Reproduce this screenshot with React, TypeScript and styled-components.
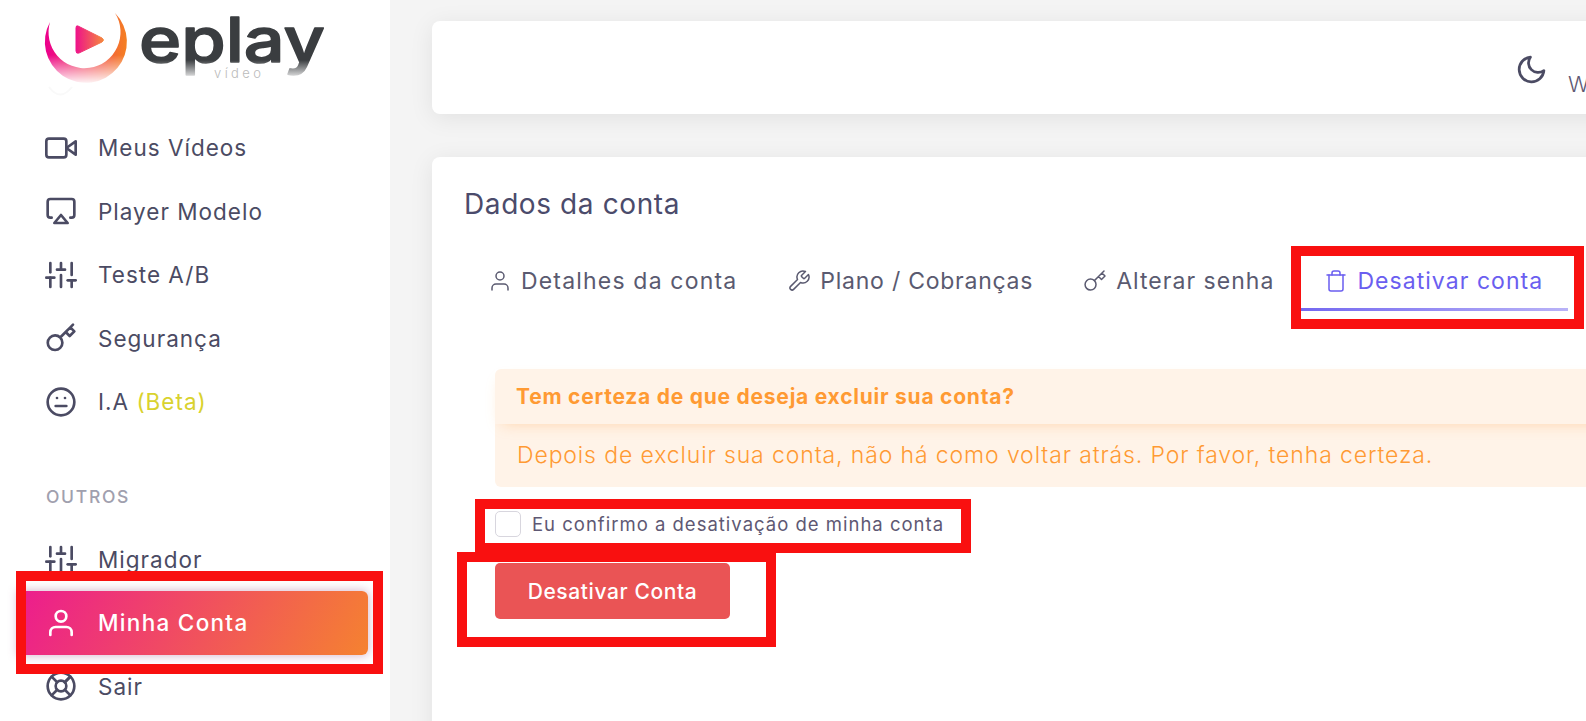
import React from 'react';
import styled, { createGlobalStyle } from 'styled-components';
import { FiVideo, FiAirplay, FiSliders, FiKey, FiMeh, FiUser, FiLifeBuoy, FiTool, FiTrash, FiMoon } from 'react-icons/fi';

const Global = createGlobalStyle`
  html, body { margin: 0; padding: 0; background: #f4f4f4; }
  * { box-sizing: border-box; }
`;

const Page = styled.div`
  position: relative;
  display: flex;
  width: 1586px;
  height: 721px;
  overflow: hidden;
  background: #f4f4f4;
  font-family: Inter, "Open Sans", sans-serif;
  color: #4b4b63;
`;

const Sidebar = styled.aside`
  flex: 0 0 390px;
  display: flex;
  flex-direction: column;
  background: #fff;
`;

const LogoBox = styled.div`
  height: 116px;
  flex: none;
`;

const NavRow = styled.div<{ $active?: boolean }>`
  flex: none;
  height: 63.5px;
  width: 350px;
  margin-left: 18px;
  padding-left: 27px;
  display: flex;
  align-items: center;
  gap: 21px;
  font-size: 22.5px;
  letter-spacing: ${p => (p.$active ? '1.3px' : '1px')};
  color: ${p => (p.$active ? '#fff' : '#4b4b63')};
  background: ${p => (p.$active ? 'linear-gradient(118deg, #ec1c8e, #f58230)' : 'transparent')};
  border-radius: ${p => (p.$active ? '0 6px 6px 0' : '0')};
  box-shadow: ${p => (p.$active ? '0 0 10px 1px rgba(150, 60, 120, 0.35)' : 'none')};
  font-weight: ${p => (p.$active ? 500 : 400)};
  svg { flex: none; }
`;

const Beta = styled.span`
  color: #d9d22e;
`;

const SectionLabel = styled.div`
  flex: none;
  height: 94px;
  padding: 52px 0 0 46px;
  font-size: 17.5px;
  line-height: 21px;
  font-weight: 500;
  letter-spacing: 1.7px;
  color: #a0a0ae;
`;

const Main = styled.main`
  flex: 1;
  min-width: 0;
  padding: 21px 0 0 42px;
  display: flex;
  flex-direction: column;
  gap: 43px;
  overflow: hidden;
`;

const Card = styled.section`
  width: 1300px;
  flex: none;
  background: #fff;
  border-radius: 8px;
  box-shadow: 0 4px 24px rgba(0, 0, 0, 0.08);
`;

const TopBar = styled(Card)`
  height: 93px;
  display: flex;
  align-items: flex-start;
  padding: 32px 0 0 1083px;
  gap: 20px;
`;

const UserName = styled.span`
  margin-top: 18px;
  font-size: 22px;
  line-height: 26px;
  font-weight: 300;
  color: #5e5873;
`;

const AccountCard = styled(Card)`
  height: 620px;
  padding: 32px 0 0 32px;
`;

const Title = styled.h2`
  margin: 0 0 31px;
  font-size: 28px;
  line-height: 31px;
  font-weight: 400;
  letter-spacing: 0.6px;
  color: #4b4b6b;
`;

const Tabs = styled.nav`
  display: flex;
  margin-left: -1px;
`;

const Tab = styled.div<{ $active?: boolean; $track?: number }>`
  position: relative;
  height: 60px;
  padding: 0 25px;
  display: flex;
  align-items: center;
  gap: 9px;
  font-size: 23px;
  font-weight: 400;
  letter-spacing: ${p => p.$track ?? 1.18}px;
  color: ${p => (p.$active ? '#6a5ef0' : '#5a5a70')};
  svg { flex: none; }
  &::after {
    content: '';
    display: ${p => (p.$active ? 'block' : 'none')};
    position: absolute;
    left: 0;
    right: 0;
    bottom: 0;
    height: 3px;
    background: linear-gradient(90deg, #7367f0, rgba(115, 103, 240, 0.5));
  }
`;

const Content = styled.div`
  margin: 58px 0 0 31px;
`;

const Alert = styled.div`
  background: #fff3e8;
  border-radius: 6px;
  color: #ff9a33;
`;

const AlertHead = styled.div`
  height: 55px;
  padding: 0 21px;
  display: flex;
  align-items: center;
  font-size: 21px;
  font-weight: 700;
  letter-spacing: 0.76px;
  box-shadow: 0 6px 15px -7px rgba(255, 159, 67, 0.4);
`;

const AlertBody = styled.div`
  height: 63px;
  padding: 0 22px 2px;
  display: flex;
  align-items: center;
  font-size: 23px;
  font-weight: 350;
  letter-spacing: 0.88px;
`;

const CheckRow = styled.label`
  margin-top: 24px;
  display: flex;
  align-items: center;
  gap: 11px;
  height: 26px;
  font-size: 18.5px;
  letter-spacing: 1px;
  color: #5e5873;
`;

const Check = styled.span`
  width: 26px;
  height: 26px;
  border: 1px solid #d8d6de;
  border-radius: 5px;
  background: #fff;
  flex: none;
`;

const Danger = styled.button`
  display: block;
  margin-top: 26px;
  width: 235px;
  height: 56px;
  border: none;
  border-radius: 5px;
  background: #ea5455;
  color: #fff;
  font-family: inherit;
  font-size: 21px;
  font-weight: 500;
  letter-spacing: 0.6px;
`;

const Mark = styled.div<{ $x: number; $y: number; $w: number; $h: number }>`
  position: absolute;
  left: ${p => p.$x}px;
  top: ${p => p.$y}px;
  width: ${p => p.$w}px;
  height: ${p => p.$h}px;
  border: 10px solid #f91010;
  pointer-events: none;
`;

const Logo = () => (
  <svg width="340" height="116" viewBox="0 0 340 116" aria-label="eplay video">
    <defs>
      <linearGradient id="lg" x1="46" x2="128" y1="0" y2="0" gradientUnits="userSpaceOnUse">
        <stop offset="0" stopColor="#ec008c" />
        <stop offset="1" stopColor="#f58220" />
      </linearGradient>
      <linearGradient id="pl" x1="75" x2="104" y1="0" y2="0" gradientUnits="userSpaceOnUse">
        <stop offset="0" stopColor="#ee0f8c" />
        <stop offset="1" stopColor="#f58a3c" />
      </linearGradient>
      <linearGradient id="fade" x1="0" x2="0" y1="55" y2="85" gradientUnits="userSpaceOnUse">
        <stop offset="0" stopColor="#fff" />
        <stop offset="1" stopColor="#000" />
      </linearGradient>
      <mask id="m" maskUnits="userSpaceOnUse" x="0" y="0" width="340" height="116">
        <rect width="340" height="116" fill="url(#fade)" />
      </mask>
      <linearGradient id="tx" x1="0" x2="0" y1="60" y2="80" gradientUnits="userSpaceOnUse">
        <stop offset="0" stopColor="#3a3d40" />
        <stop offset="1" stopColor="#ffffff" />
      </linearGradient>
    </defs>
    <path d="M50 22 A41 41 0 1 0 115 13 A36 36 0 1 1 50 22 Z" fill="url(#lg)" mask="url(#m)" />
    <path d="M78 26 Q76 25 76 28 L76 51 Q76 54 79 53 L102 42 Q105 40 102 38 Z" fill="url(#pl)" stroke="url(#pl)" strokeWidth="1" />
    <path d="M49 87 Q60 102 72 87" fill="none" stroke="#f9f9f9" strokeWidth="2" />
    <text x="139" y="62" fontFamily="Inter, sans-serif" fontWeight="500" fontSize="62" textLength="186" lengthAdjust="spacingAndGlyphs" fill="url(#tx)" stroke="url(#tx)" strokeWidth="1.5" strokeLinejoin="round">eplay</text>
    <text x="214" y="78" fontFamily="Inter, sans-serif" fontWeight="300" fontSize="13" letterSpacing="3.4" fill="#bbb">vídeo</text>
  </svg>
);

const nav = (Icon: typeof FiVideo, label: React.ReactNode, active?: boolean) => (
  <NavRow $active={active}>
    <Icon size={32} />
    <span>{label}</span>
  </NavRow>
);

export default function App() {
  return (
    <Page>
      <Global />
      <Sidebar>
        <LogoBox><Logo /></LogoBox>
        {nav(FiVideo, 'Meus Vídeos')}
        {nav(FiAirplay, 'Player Modelo')}
        {nav(FiSliders, 'Teste A/B')}
        {nav(FiKey, 'Segurança')}
        {nav(FiMeh, <>I.A <Beta>(Beta)</Beta></>)}
        <SectionLabel>OUTROS</SectionLabel>
        {nav(FiSliders, 'Migrador')}
        {nav(FiUser, 'Minha Conta', true)}
        {nav(FiLifeBuoy, 'Sair')}
      </Sidebar>
      <Main>
        <TopBar as="header">
          <FiMoon size={33} />
          <UserName>W</UserName>
        </TopBar>
        <AccountCard>
          <Title>Dados da conta</Title>
          <Tabs>
            <Tab><FiUser size={24} strokeWidth={1.5} />Detalhes da conta</Tab>
            <Tab $track={0.75}><FiTool size={24} strokeWidth={1.5} />Plano / Cobranças</Tab>
            <Tab $track={1.03}><FiKey size={24} strokeWidth={1.5} />Alterar senha</Tab>
            <Tab $active $track={1.05}><FiTrash size={24} strokeWidth={1.5} />Desativar conta</Tab>
          </Tabs>
          <Content>
            <Alert>
              <AlertHead>Tem certeza de que deseja excluir sua conta?</AlertHead>
              <AlertBody>Depois de excluir sua conta, não há como voltar atrás. Por favor, tenha certeza.</AlertBody>
            </Alert>
            <CheckRow><Check />Eu confirmo a desativação de minha conta</CheckRow>
            <Danger>Desativar Conta</Danger>
          </Content>
        </AccountCard>
      </Main>
      <Mark $x={16} $y={571} $w={367} $h={103} />
      <Mark $x={1291} $y={246} $w={293} $h={83} />
      <Mark $x={475} $y={499} $w={496} $h={54} />
      <Mark $x={457} $y={552} $w={319} $h={95} />
    </Page>
  );
}
